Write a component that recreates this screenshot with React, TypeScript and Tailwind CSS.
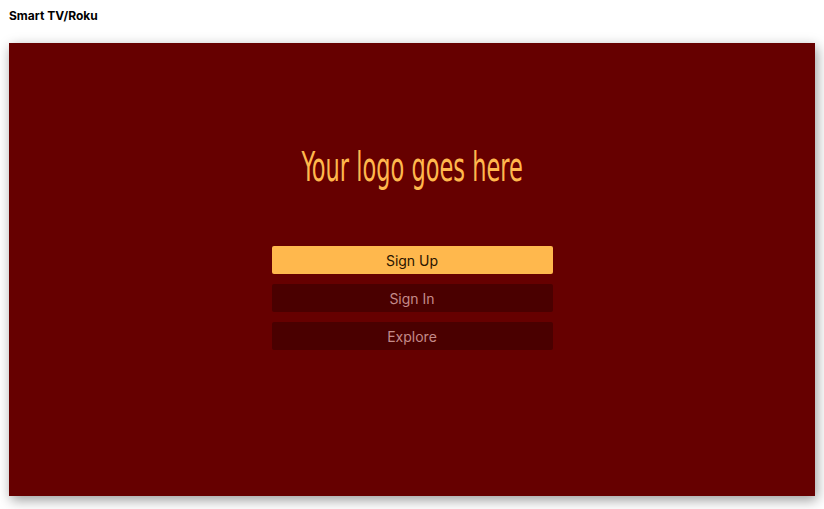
export default function App() {
  return (
    <div className="min-h-screen bg-white px-[9px] pt-[8px] font-['Inter','Liberation_Sans',sans-serif]">
      <h1 className="text-[12px] font-bold leading-[16px] text-black">Smart TV/Roku</h1>
      <div className="mt-[19px] flex h-[453px] w-[806px] flex-col items-center bg-[#660000] shadow-[2px_4px_12px_rgba(0,0,0,0.4)]">
        <div className="mt-[101px] h-[46px] origin-center scale-x-[0.625] whitespace-nowrap font-['Liberation_Sans_Narrow','DejaVu_Sans_Condensed',sans-serif] text-[40px] leading-[46px] text-[#ffb84d]">
          Your logo goes here
        </div>
        <div className="mt-[56px] flex w-[281px] flex-col gap-[10px]">
          <button className="h-[28px] rounded-[2px] bg-[#ffb84d] text-[14px] text-[#2a1500]">Sign Up</button>
          <button className="h-[28px] rounded-[2px] bg-[#4a0000] text-[14px] text-[#c48a8a]">Sign In</button>
          <button className="h-[28px] rounded-[2px] bg-[#4a0000] text-[14px] text-[#c48a8a]">Explore</button>
        </div>
      </div>
    </div>
  );
}
